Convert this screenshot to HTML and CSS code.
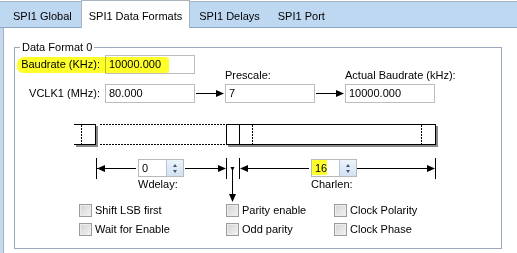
FILE: index.html
```html
<!DOCTYPE html>
<html>
<head>
<meta charset="utf-8">
<link rel="stylesheet" href="styles.css">
</head>
<body>
<div class="tabs">
  <div class="tab first">SPI1 Global</div>
  <div class="tab active">SPI1 Data Formats</div>
  <div class="tab">SPI1 Delays</div>
  <div class="tab">SPI1 Port</div>
</div>
<div class="panel">
  <fieldset class="group">
    <legend>Data Format 0</legend>
    <div class="form">
      <span class="marker marker-baud"></span>
      <div class="lbl lbl-baud">Baudrate (KHz):</div>
      <div class="field f-baud">10000.000</div>
      <div class="lbl-top c-pre">Prescale:</div>
      <div class="lbl-top c-act">Actual Baudrate (kHz):</div>
      <div class="lbl lbl-vclk">VCLK1 (MHz):</div>
      <div class="field f-vclk">80.000</div>
      <svg class="arrow a1" width="30" height="19" viewBox="0 0 30 19"><line x1="1" y1="9.5" x2="27" y2="9.5" stroke="#000" stroke-width="1"/><polygon points="29,9.5 21,6 21,13" fill="#000"/></svg>
      <div class="field f-pre">7</div>
      <svg class="arrow a2" width="30" height="19" viewBox="0 0 30 19"><line x1="1" y1="9.5" x2="27" y2="9.5" stroke="#000" stroke-width="1"/><polygon points="29,9.5 21,6 21,13" fill="#000"/></svg>
      <div class="field f-act">10000.000</div>
    </div>

    <div class="diagram">
      <div class="frame-left"><i class="dash dash-l"></i></div>
      <div class="dots dots-top"></div>
      <div class="dots dots-bot"></div>
      <div class="frame-main"><i class="solid-v"></i><i class="dash dash-m1"></i><i class="dash dash-m2"></i></div>

      <svg class="dim" width="488" height="87" viewBox="0 0 488 87">
        <g stroke="#000" stroke-width="1" fill="none" shape-rendering="crispEdges">
          <line x1="81.5" y1="43" x2="81.5" y2="64"/>
          <line x1="82" y1="53.5" x2="121" y2="53.5"/>
          <line x1="170" y1="53.5" x2="208" y2="53.5"/>
          <line x1="211.5" y1="43" x2="211.5" y2="64"/>
          <line x1="224.5" y1="43" x2="224.5" y2="64"/>
          <line x1="217.5" y1="53" x2="217.5" y2="80"/>
          <line x1="228" y1="53.5" x2="294" y2="53.5"/>
          <line x1="342" y1="53.5" x2="416" y2="53.5"/>
          <line x1="420.5" y1="43" x2="420.5" y2="64"/>
        </g>
        <g fill="#000">
          <polygon points="82,53.5 90,50 90,57"/>
          <polygon points="211,53.5 203,50 203,57"/>
          <polygon points="225,53.5 233,50 233,57"/>
          <polygon points="420,53.5 412,50 412,57"/>
          <polygon points="217.5,87 214,79 221,79"/>
          <polygon points="217.5,56 215.5,52 219.5,52"/>
        </g>
      </svg>

      <div class="spin s-wd">
        <span class="spin-val">0</span>
        <span class="spin-btn"><i class="up"></i><i class="down"></i></span>
      </div>
      <div class="cap c-wd">Wdelay:</div>

      <div class="spin s-cl">
        <span class="marker marker-cl"></span>
        <span class="spin-val">16</span>
        <span class="spin-btn"><i class="up"></i><i class="down"></i></span>
      </div>
      <div class="cap c-cl">Charlen:</div>
    </div>

    <div class="checks">
      <label class="check"><span class="box"></span>Shift LSB first</label>
      <label class="check"><span class="box"></span>Parity enable</label>
      <label class="check"><span class="box"></span>Clock Polarity</label>
      <label class="check"><span class="box"></span>Wait for Enable</label>
      <label class="check"><span class="box"></span>Odd parity</label>
      <label class="check"><span class="box"></span>Clock Phase</label>
    </div>
  </fieldset>
</div>
</body>
</html>
```

FILE: styles.css
```css
html, body {
  margin: 0;
  padding: 0;
}
body {
  width: 517px;
  height: 253px;
  overflow: hidden;
  background: #fff;
  color: #000;
  font-family: "Liberation Sans", Arial, sans-serif;
  font-size: 11px;
}

/* ---------- tabs ---------- */
.tabs {
  display: flex;
  height: 25px;
  margin-top: 1px;
  border-top: 1px solid #a7b3bf;
  border-bottom: 1px solid #8fa4ba;
  background: #bfd8f1;
}
.tab {
  padding: 4px 9px 0;
  line-height: 21px;
  white-space: nowrap;
}
.tab.first {
  margin-left: 4px;
}
.tab.active {
  margin: -2px 0 -1px;
  padding: 5px 7px 0;
  background: #fff;
  border: 1px solid #a7b3bf;
  border-bottom: none;
}

/* ---------- panel ---------- */
.panel {
  height: 225px;
  background: linear-gradient(to right, #c6d9ec 0 3px, #9fb1c3 3px 4px, #fff 4px);
  overflow: hidden;
}
.group {
  box-sizing: border-box;
  width: 488px;
  height: 208px;
  margin: 13px 0 0 14px;
  padding: 0;
  min-width: 0;
  border: 1px solid #9aabbd;
}
.group legend {
  margin-left: 5px;
  padding: 0 2px;
  line-height: 13px;
}

/* ---------- top form ---------- */
.form {
  position: relative;
  display: grid;
  grid-template-columns: 90px 90px 30px 90px 30px 90px;
  grid-template-rows: 19px 10px 19px;
  margin-top: 1px;
}
.lbl {
  align-self: center;
  text-align: right;
  padding-right: 5px;
  line-height: 13px;
  white-space: nowrap;
}
.lbl-baud { grid-row: 1; grid-column: 1; }
.lbl-vclk { grid-row: 3; grid-column: 1; }
.lbl-top {
  grid-row: 1 / 3;
  align-self: end;
  margin-bottom: 2px;
  line-height: 13px;
  white-space: nowrap;
}
.c-pre { grid-column: 4; }
.c-act { grid-column: 6; }
.field {
  box-sizing: border-box;
  height: 19px;
  border: 1px solid #bdbdbd;
  background: #fff;
  padding-left: 3px;
  line-height: 17px;
}
.f-baud { grid-row: 1; grid-column: 2; }
.f-vclk { grid-row: 3; grid-column: 2; }
.f-pre  { grid-row: 3; grid-column: 4; }
.f-act  { grid-row: 3; grid-column: 6; }
.arrow { grid-row: 3; display: block; }
.a1 { grid-column: 3; }
.a2 { grid-column: 5; }

.marker {
  position: absolute;
  background: #ffff2a;
  mix-blend-mode: multiply;
  z-index: 2;
  pointer-events: none;
}
.marker-baud {
  left: 2px;
  top: 2px;
  width: 152px;
  height: 16px;
  border-radius: 7px 3px 3px 6px;
}

/* ---------- diagram ---------- */
.diagram {
  position: relative;
  height: 87px;
  margin-top: 12px;
}
.frame-left {
  position: absolute;
  left: 59px;
  top: 9px;
  width: 22px;
  height: 21px;
  box-sizing: border-box;
  border: 1px solid #000;
  border-left: none;
  box-shadow: 2px 2px 0 #8a8a8a;
}
.frame-main {
  position: absolute;
  left: 211px;
  top: 9px;
  width: 210px;
  height: 21px;
  box-sizing: border-box;
  border: 1px solid #000;
  box-shadow: 2px 2px 0 #8a8a8a;
}
.dash {
  position: absolute;
  top: 0;
  bottom: 0;
  width: 1px;
  background: repeating-linear-gradient(to bottom, #000 0 2px, transparent 2px 3px);
}
.dash-l { left: 7px; }
.dash-m1 { left: 25px; }
.dash-m2 { left: 194px; }
.solid-v {
  position: absolute;
  top: 0;
  bottom: 0;
  left: 12px;
  width: 1px;
  background: #000;
}
.dots {
  position: absolute;
  left: 85px;
  width: 126px;
  height: 1px;
  background: repeating-linear-gradient(to right, #000 0 2px, transparent 2px 3px);
}
.dots-top { top: 9px; }
.dots-bot { top: 29px; }
.dim {
  position: absolute;
  left: 0;
  top: 0;
}
.spin {
  position: absolute;
  top: 44px;
  width: 46px;
  height: 18px;
  box-sizing: border-box;
  border: 1px solid #b9b9b9;
  background: #fff;
  display: flex;
}
.s-wd { left: 123px; }
.s-cl { left: 296px; }
.spin-val {
  flex: 1;
  padding-left: 3px;
  line-height: 16px;
  position: relative;
}
.spin-btn {
  width: 17px;
  box-sizing: border-box;
  border-left: 1px solid #b4c6da;
  background: linear-gradient(#edf3fa, #d2e1f1);
  display: flex;
  flex-direction: column;
  align-items: center;
  justify-content: space-around;
  padding: 2px 0;
}
.spin-btn i {
  width: 0;
  height: 0;
  border-left: 2.5px solid transparent;
  border-right: 2.5px solid transparent;
}
.spin-btn .up { border-bottom: 3px solid #3f5675; }
.spin-btn .down { border-top: 3px solid #3f5675; }
.marker-cl {
  left: 0;
  top: 0;
  width: 15px;
  height: 15px;
  border-radius: 1px;
}
.cap {
  position: absolute;
  top: 63px;
  line-height: 13px;
}
.c-wd { left: 123px; }
.c-cl { left: 296px; }

/* ---------- checkboxes ---------- */
.checks {
  display: grid;
  grid-template-columns: 147px 108px auto;
  grid-auto-rows: 17px;
  row-gap: 2px;
  padding-left: 64px;
}
.check {
  display: flex;
  align-items: center;
  white-space: nowrap;
  line-height: 13px;
}
.box {
  box-sizing: border-box;
  width: 13px;
  height: 13px;
  margin-right: 3px;
  border: 1px solid #9c9c9c;
  background: linear-gradient(135deg, #d3d3d3, #f3f3f3);
  box-shadow: inset 0 0 0 1px #ececec;
}
```
